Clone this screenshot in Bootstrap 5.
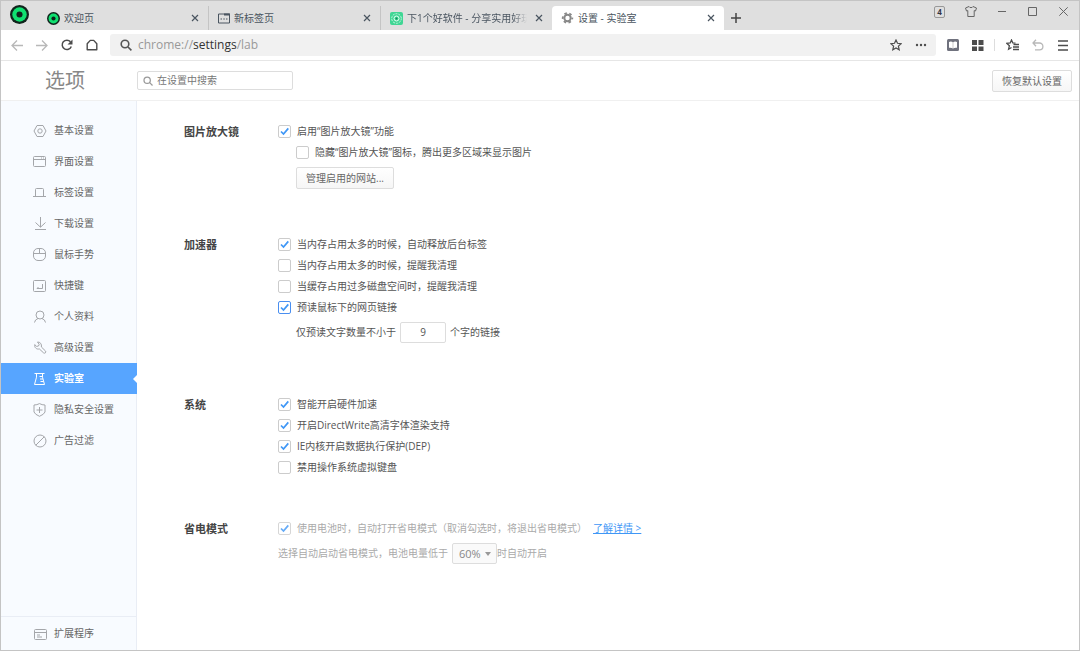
<!DOCTYPE html>
<html lang="zh-CN">
<head>
<meta charset="utf-8">
<meta name="viewport" content="width=device-width, initial-scale=1">
<title>设置 - 实验室</title>
<link rel="stylesheet" href="https://cdn.jsdelivr.net/npm/bootstrap@5.3.0/dist/css/bootstrap.min.css">
<style>
body{font-family:"Open Sans","Noto Sans CJK SC",sans-serif;font-size:10px;line-height:21px;color:#555;border:1px solid #c4c4c4;background:#fff}
button{color:inherit}
svg{display:block;flex:none;fill:none;stroke:currentColor}
.plain-btn{border:0;background:none;padding:0;display:flex;align-items:center;justify-content:center}

/* tab strip */
.strip{background:#dfdfdf;height:29px}
.logo-btn{width:36px;height:26px}
.tab{width:171px;height:24px;padding:0 5px 0 10px;color:#4a5560;white-space:nowrap}
.tab + .tab{border-left:1px solid #c4c4c4;width:172px;padding-left:9px}
.tab + .tab.current{background:#fff;border:0;border-radius:4px 4px 0 0}
.tab a{color:inherit;text-decoration:none;overflow:hidden;flex:1;min-width:0}
.tab a.fade-end{-webkit-mask-image:linear-gradient(90deg,#000 88%,transparent);mask-image:linear-gradient(90deg,#000 88%,transparent)}
.tab .plain-btn{width:16px;height:16px}
.gear{color:#888}
.new-tab{width:24px;height:24px;color:#444}
.win-btn{width:31px;height:21px;color:#666}
.count-badge{width:11px;height:12px;border:1px solid #999;border-radius:2px;font-size:8px;line-height:10px;font-weight:700;color:#334}

/* toolbar */
.toolbar{height:31px;border-bottom:1px solid #e6e6e6;padding:0 4px 0 3px}
.tool{width:25px;height:24px;color:#4c4c4c}
.tool.dim{color:#b8b8b8}
.omnibox{height:22px;background:#f1f1f1;border-radius:3px;margin-left:6px;padding:0 3px 0 10px}
.omnibox .address{font-size:12px;color:#999;line-height:22px;padding-left:6px}
.omnibox .address b{font-weight:400;color:#333}
.tool-rule{width:1px;height:12px;background:#ddd;margin:0 5px 0 4px}

/* page head */
.page-head{height:40px;border-bottom:1px solid #f0f0f0;padding-right:7px}
.page-title{width:136px;padding-left:44px;font-size:20px;line-height:38px;color:#888;font-weight:400}
.search-box{width:156px;height:19px;border:1px solid #ddd;border-radius:2px;padding:0 5px;color:#999}
.search-box input{border:0;outline:0;width:100%;padding:0;font-size:10px;line-height:17px;color:#555;background:none}
.search-box input::placeholder{color:#777;opacity:1}
.soft-btn{border:1px solid #ddd;border-radius:2px;background:linear-gradient(#fff,#f6f6f6);font-size:10px;line-height:20px;padding:0 9px;color:#666}

/* side menu */
.side{width:136px;padding-top:14px;background:#f8fbff;border-right:1px solid #e9edf5}
.side-link{display:flex;align-items:center;gap:7px;height:31px;padding-left:32px;color:#666;text-decoration:none;position:relative}
.side-link svg{color:#a4a6aa}
.side-link.current{background:#57a5ff;color:#fff;font-weight:700;margin-right:-1px}
.side-link.current svg{color:#fff}
.side-link.current::after{content:"";position:absolute;right:0;top:12px;border:4px solid transparent;border-right-color:#fff;border-left:0}
.side-foot{border-top:1px solid #e9edf5;height:34px;padding-top:1px}

/* settings */
.panel{padding:20px 20px 0 47px}
.group{padding-bottom:40px}
.group h2{width:94px;font-size:11px;line-height:21px;font-weight:700;color:#444;margin:0;flex:none}
.opt{display:flex;align-items:center;gap:6px;min-height:21px}
.opt .form-check-input{width:13px;height:13px;margin:0;border:1px solid #ccc;border-radius:2px;flex:none;box-shadow:none}
.opt .form-check-input:checked{background-color:#fff;background-size:11px 11px;background-image:url("data:image/svg+xml,%3csvg xmlns='http://www.w3.org/2000/svg' viewBox='0 0 11 11'%3e%3cpath d='M2 5.5 4.5 8 9.3 2.4' fill='none' stroke='%233f97f6' stroke-width='1.7'/%3e%3c/svg%3e")}
.opt .form-check-input.active-box{border-color:#4a8ff0}
.opt .form-check-input:disabled{opacity:.8}
.opt .form-check-input:disabled ~ label{opacity:1}
.indent{margin-left:18px}
.manage-row{padding:4px 0 5px}
.preload-group{padding-bottom:11px}
.num-box{width:46px;height:21px;border:1px solid #ddd;border-radius:2px;text-align:center;font-size:10px;color:#555;padding:0}
.pct-box{width:45px;height:21px;border:1px solid #ddd;border-radius:2px;padding:0 0 0 6px;font-size:11px;line-height:19px;color:#888;opacity:1;appearance:none;background:#fafafa url("data:image/svg+xml,%3csvg xmlns='http://www.w3.org/2000/svg' width='6' height='4'%3e%3cpath d='M0 0h6L3 4z' fill='%23999'/%3e%3c/svg%3e") no-repeat right 5px center}
.muted{color:#aaa}
.more-link{color:#3f97f6}
</style>
</head>
<body class="d-flex flex-column min-vh-100">

<svg width="0" height="0" class="position-absolute" aria-hidden="true">
  <symbol id="ring" viewBox="0 0 20 20"><g stroke="none"><circle cx="10" cy="10" r="10" fill="#10241c"/><circle cx="10" cy="10" r="7.6" fill="#10e070"/><circle cx="10" cy="10" r="3.2" fill="#10241c"/></g></symbol>
  <symbol id="cross" viewBox="0 0 8 8"><path d="M1 1l6 6M7 1L1 7" stroke-width="1.2"/></symbol>
  <symbol id="lens" viewBox="0 0 12 12"><circle cx="5" cy="5" r="3.8"/><path d="M8 8l3.4 3.4"/></symbol>
</svg>

<header>
  <div class="strip d-flex align-items-end">
    <button class="plain-btn logo-btn align-self-start" aria-label="菜单"><svg width="19" height="19"><use href="#ring"/></svg></button>
    <nav class="d-flex" aria-label="标签页">
      <div class="tab d-flex align-items-center gap-1">
        <svg width="13" height="13"><use href="#ring"/></svg>
        <a href="#">欢迎页</a>
        <button class="plain-btn" aria-label="关闭"><svg width="8" height="8"><use href="#cross"/></svg></button>
      </div>
      <div class="tab d-flex align-items-center gap-1">
        <svg width="12" height="11" viewBox="0 0 12 11"><path d="M.5 1h11v9H.5z"/><path d="M6 1.5h6" stroke-width="2"/><path d="M2.5 6h1.500M5.300 6h1.500M8 6h1.500" stroke-width="1.200"/></svg>
        <a href="#">新标签页</a>
        <button class="plain-btn" aria-label="关闭"><svg width="8" height="8"><use href="#cross"/></svg></button>
      </div>
      <div class="tab d-flex align-items-center gap-1">
        <svg width="13" height="13" viewBox="0 0 13 13"><rect width="13" height="13" rx="2" fill="#3fd694" stroke="none"/><circle cx="6.500" cy="6.500" r="4.800" stroke="#c9f5e2" stroke-dasharray="2 1"/><circle cx="6.500" cy="6.500" r="2.500" stroke="#e6fff4"/><circle cx="6.500" cy="6.500" r="1" fill="#0f8a58" stroke="none"/></svg>
        <a href="#" class="fade-end">下1个好软件 - 分享实用好玩有</a>
        <button class="plain-btn" aria-label="关闭"><svg width="8" height="8"><use href="#cross"/></svg></button>
      </div>
      <div class="tab current d-flex align-items-center gap-1">
        <svg class="gear" width="13" height="12" viewBox="0 0 12 12"><circle cx="6" cy="6" r="3.200" stroke-width="2"/><circle cx="6" cy="6" r="4.800" stroke-width="1.800" stroke-dasharray="2.500 2.526" stroke-dashoffset="1.250"/></svg>
        <a href="#">设置 - 实验室</a>
        <button class="plain-btn" aria-label="关闭"><svg width="8" height="8"><use href="#cross"/></svg></button>
      </div>
    </nav>
    <button class="plain-btn new-tab" aria-label="新建标签页"><svg width="10" height="10" viewBox="0 0 10 10"><path d="M5 0v10M0 5h10" stroke-width="1.500"/></svg></button>
    <div class="d-flex ms-auto align-self-start">
      <button class="plain-btn win-btn" aria-label="4"><span class="count-badge">4</span></button>
      <button class="plain-btn win-btn" aria-label="皮肤"><svg width="12" height="11" viewBox="0 0 12 11"><path d="M4 .5C4.500 2 7.500 2 8 .5L11.500 2 10.500 5 9.200 4.600v5.900H2.800V4.600L1.500 5 .5 2z"/></svg></button>
      <button class="plain-btn win-btn" aria-label="最小化"><svg width="8" height="9" viewBox="0 0 8 9"><path d="M0 4.500h8"/></svg></button>
      <button class="plain-btn win-btn" aria-label="最大化"><svg width="9" height="9" viewBox="0 0 9 9"><path d="M.5.5h8v8h-8z"/></svg></button>
      <button class="plain-btn win-btn" aria-label="关闭窗口"><svg width="9" height="9" viewBox="0 0 9 9"><path d="M.3.3l8.400 8.400M8.700.3L.3 8.700"/></svg></button>
    </div>
  </div>

  <div class="toolbar d-flex align-items-center">
    <button class="plain-btn tool dim" aria-label="后退"><svg width="12" height="11" viewBox="0 0 12 11" stroke-width="1.300"><path d="M12 5.500H1M6 .5l-5 5 5 5"/></svg></button>
    <button class="plain-btn tool dim" aria-label="前进"><svg width="12" height="11" viewBox="0 0 12 11" stroke-width="1.300"><path d="M0 5.500h11M6 .5l5 5-5 5"/></svg></button>
    <button class="plain-btn tool" aria-label="刷新"><svg width="12" height="12" viewBox="0 0 12 12"><path d="M10.300 7.500A4.700 4.700 0 1 1 9.500 2.800" stroke-width="1.500"/><path d="M11.500.5v5h-5z" fill="currentColor" stroke="none"/></svg></button>
    <button class="plain-btn tool" aria-label="主页"><svg width="12" height="12" viewBox="0 0 12 12"><path d="M1.200 4.800L4.300 1.400h3.400l3.100 3.400v6H1.200z" stroke-width="1.400" stroke-linejoin="round"/></svg></button>
    <div class="omnibox d-flex align-items-center flex-grow-1">
      <svg width="12" height="12" stroke-width="1.600"><use href="#lens"/></svg>
      <a href="#" class="address text-decoration-none flex-grow-1">chrome://<b>settings</b>/lab</a>
      <button class="plain-btn tool" aria-label="收藏"><svg width="12" height="12" viewBox="0 0 12 12"><path d="M6 1l1.500 3.300 3.700.4-2.800 2.400.8 3.600L6 8.900l-3.200 1.800.8-3.600L.8 4.700l3.700-.4z" stroke-width="1.200"/></svg></button>
      <button class="plain-btn tool" aria-label="更多"><svg width="12" height="4" viewBox="0 0 12 4"><g fill="currentColor" stroke="none"><circle cx="2" cy="2" r="1.200"/><circle cx="6" cy="2" r="1.200"/><circle cx="10" cy="2" r="1.200"/></g></svg></button>
    </div>
    <div class="d-flex align-items-center ps-1">
      <button class="plain-btn tool" aria-label="阅读"><svg width="12" height="12" viewBox="0 0 12 12"><g stroke="none"><rect width="12" height="12" rx="1.500" fill="#70727e"/><path d="M2 3q2-1.300 4 .3 2-1.600 4-.3v5.800q-2.500-.4-4 .8-1.500-1.200-4-.8z" fill="#fff"/></g><path d="M6 3v6" stroke="#aaa" stroke-width=".6"/></svg></button>
      <button class="plain-btn tool" aria-label="扩展"><svg width="12" height="11" viewBox="0 0 12 11"><path d="M0 0h5v5H0zM6.500 0h5v5h-5zM0 6.500h5v5H0zM6.500 6.500h5v5h-5z" fill="currentColor" stroke="none"/></svg></button>
      <span class="tool-rule"></span>
      <button class="plain-btn tool" aria-label="收藏夹"><svg width="13" height="12" viewBox="0 0 13 12"><path d="M9.500 4.200L6.800 4 5.500 1 4.200 4 .9 4.400l2.500 2.300-.8 3.500 2.900-1.700" stroke-width="1.300"/><path d="M7.500 5.500H13M7 8h6M7 10.500h6" stroke-width="1.300"/></svg></button>
      <button class="plain-btn tool dim" aria-label="撤销"><svg width="12" height="12" viewBox="0 0 12 12"><path d="M1 4h6.500a3.400 3.400 0 0 1 0 6.800H3M4 .8L1 4l3 3.200" stroke-width="1.300"/></svg></button>
      <button class="plain-btn tool" aria-label="菜单"><svg width="10" height="11" viewBox="0 0 10 11"><path d="M0 1h10M0 5.500h10M0 10h10" stroke-width="1.400"/></svg></button>
    </div>
  </div>

  <div class="page-head d-flex align-items-center">
    <h1 class="page-title m-0">选项</h1>
    <label class="search-box d-flex align-items-center gap-1">
      <svg width="10" height="10" stroke-width="1.500"><use href="#lens"/></svg>
      <input type="search" placeholder="在设置中搜索" aria-label="在设置中搜索">
    </label>
    <button class="soft-btn ms-auto">恢复默认设置</button>
  </div>
</header>

<div class="d-flex flex-grow-1">
  <nav class="side d-flex flex-column flex-shrink-0" aria-label="设置">
    <div class="flex-grow-1">
    <a class="side-link" href="#"><svg width="14" height="14" viewBox="0 0 14 14"><path d="M4 1.500h6L13 7l-3 5.500H4L1 7z" stroke-linejoin="round"/><circle cx="7" cy="7" r="2.200"/></svg>基本设置</a>
    <a class="side-link" href="#"><svg width="14" height="14" viewBox="0 0 14 14"><rect x=".5" y="1.500" width="12" height="10" rx="1"/><path d="M.5 4.500h12M8 3h1M10 3h1"/></svg>界面设置</a>
    <a class="side-link" href="#"><svg width="14" height="14" viewBox="0 0 14 14"><path d="M0 10.500h13M2.500 10.500v-7q0-1 1-1h6q1 0 1 1v7"/></svg>标签设置</a>
    <a class="side-link" href="#"><svg width="14" height="14" viewBox="0 0 14 14"><path d="M7.500 0v10M2.500 5.500l5 4.700 5-4.700M2 12.500h11"/></svg>下载设置</a>
    <a class="side-link" href="#"><svg width="14" height="14" viewBox="0 0 14 14"><rect x=".5" y=".5" width="12" height="12" rx="4.500"/><path d="M.5 5.500h12M6.500.5v5"/></svg>鼠标手势</a>
    <a class="side-link" href="#"><svg width="14" height="14" viewBox="0 0 14 14"><rect x=".5" y="1.500" width="12" height="11" rx="1"/><path d="M9.500 5v4.500H4M5.500 8L4 9.500"/></svg>快捷键</a>
    <a class="side-link" href="#"><svg width="14" height="14" viewBox="0 0 14 14"><circle cx="7" cy="5" r="4"/><path d="M1.500 12.500q.4-3 3.500-4M12.500 12.500Q12.100 9.500 9 8.500"/></svg>个人资料</a>
    <a class="side-link" href="#"><svg width="14" height="14" viewBox="0 0 14 14"><path d="M4.500 1l1.700 2.300-.7 1.700-1.900.4L1.700 3.600C1.200 6.500 3.600 8.700 6.300 7.900l4.200 3.900q1 .8 1.900 0 .8-1 0-1.900L8.400 6C9 3 7 .8 4.500 1z" stroke-linejoin="round"/></svg>高级设置</a>
    <a class="side-link current" href="#" aria-current="page"><svg width="14" height="14" viewBox="0 0 14 14"><path d="M1.500 1.500h10M3.500 1.500v3.700l-2 7.300h10l-2-7.300V1.500M6.500 4.500h3M7 7h3M7.500 9.500h3"/></svg>实验室</a>
    <a class="side-link" href="#"><svg width="14" height="14" viewBox="0 0 14 14"><path d="M6.500.6q2.500 1.400 5.500 1.400V9q-1 2.500-5.500 4.300Q2 11.500 1 9V2Q4 2 6.500.6zM6.500 4v6M3.500 7h6"/></svg>隐私安全设置</a>
    <a class="side-link" href="#"><svg width="14" height="14" viewBox="0 0 14 14"><circle cx="7" cy="7" r="6"/><path d="M2.700 11.300l8.600-8.600"/></svg>广告过滤</a>
    </div>
    <div class="side-foot">
      <a class="side-link" href="#"><svg width="14" height="14" viewBox="0 0 14 14"><rect x="1.500" y="2.500" width="12" height="10" rx="1"/><path d="M1.500 5.500h12M4 8h3M4 10h5"/></svg>扩展程序</a>
    </div>
  </nav>

  <main class="panel flex-grow-1">
    <section class="group d-flex">
      <h2>图片放大镜</h2>
      <div>
        <div class="opt"><input class="form-check-input" type="checkbox" id="zoomOn" checked><label for="zoomOn">启用“图片放大镜”功能</label></div>
        <div class="opt indent"><input class="form-check-input" type="checkbox" id="zoomHide"><label for="zoomHide">隐藏“图片放大镜”图标，腾出更多区域来显示图片</label></div>
        <div class="indent manage-row"><button class="soft-btn">管理启用的网站...</button></div>
      </div>
    </section>

    <section class="group d-flex">
      <h2>加速器</h2>
      <div class="preload-group">
        <div class="opt"><input class="form-check-input" type="checkbox" id="memFree" checked><label for="memFree">当内存占用太多的时候，自动释放后台标签</label></div>
        <div class="opt"><input class="form-check-input" type="checkbox" id="memTip"><label for="memTip">当内存占用太多的时候，提醒我清理</label></div>
        <div class="opt"><input class="form-check-input" type="checkbox" id="cacheTip"><label for="cacheTip">当缓存占用过多磁盘空间时，提醒我清理</label></div>
        <div class="opt"><input class="form-check-input active-box" type="checkbox" id="preload" checked><label for="preload">预读鼠标下的网页链接</label></div>
        <div class="indent d-flex gap-1 pt-1"><label for="minChars">仅预读文字数量不小于</label><input class="num-box" id="minChars" type="text" value="9"><span>个字的链接</span></div>
      </div>
    </section>

    <section class="group d-flex">
      <h2>系统</h2>
      <div>
        <div class="opt"><input class="form-check-input" type="checkbox" id="gpu" checked><label for="gpu">智能开启硬件加速</label></div>
        <div class="opt"><input class="form-check-input" type="checkbox" id="dwrite" checked><label for="dwrite">开启DirectWrite高清字体渲染支持</label></div>
        <div class="opt"><input class="form-check-input" type="checkbox" id="dep" checked><label for="dep">IE内核开启数据执行保护(DEP)</label></div>
        <div class="opt"><input class="form-check-input" type="checkbox" id="vkbd"><label for="vkbd">禁用操作系统虚拟键盘</label></div>
      </div>
    </section>

    <section class="group d-flex">
      <h2>省电模式</h2>
      <div class="muted">
        <div class="opt"><input class="form-check-input" type="checkbox" id="battery" checked disabled><label for="battery">使用电池时，自动打开省电模式（取消勾选时，将退出省电模式）</label><a class="more-link" href="#">了解详情 &gt;</a></div>
        <div class="d-flex pt-1"><label for="level" class="pe-1">选择自动启动省电模式，电池电量低于</label><select class="pct-box" id="level" disabled><option>60%</option></select><span>时自动开启</span></div>
      </div>
    </section>
  </main>
</div>

<script src="https://cdn.jsdelivr.net/npm/bootstrap@5.3.0/dist/js/bootstrap.bundle.min.js"></script>
</body>
</html>
